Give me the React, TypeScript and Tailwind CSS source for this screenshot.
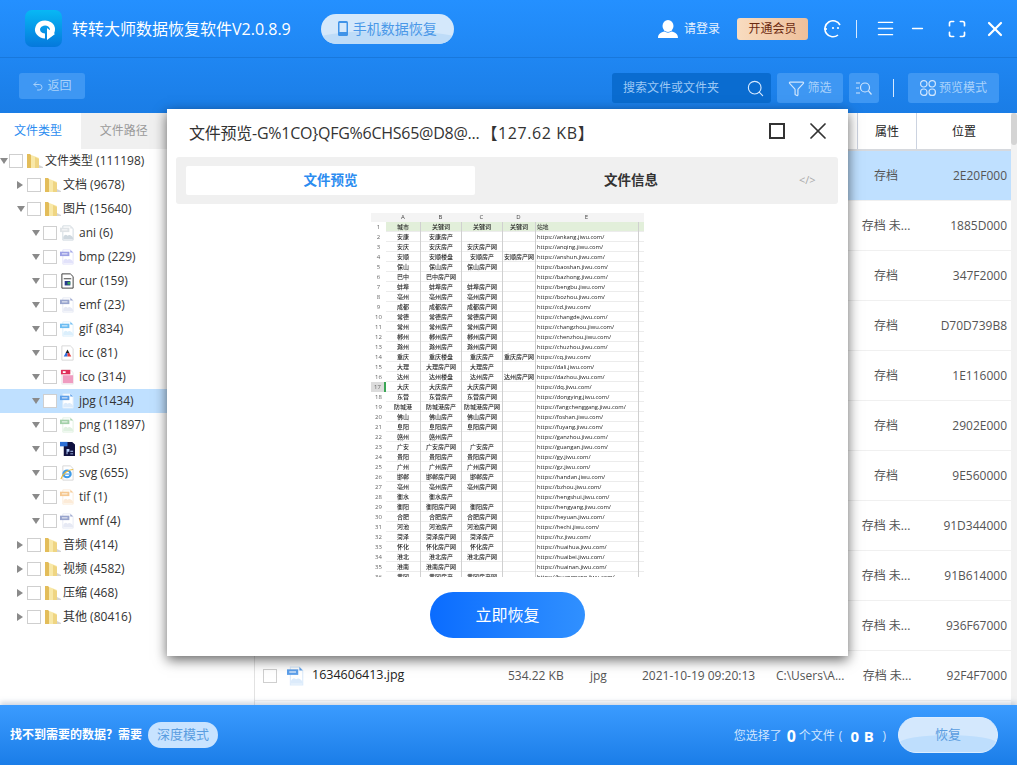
import { Funnel, Maximize, Menu, Minus, Search, Undo2, X } from 'lucide-react';

const font = { fontFamily: '"Open Sans", "Noto Sans CJK SC", sans-serif' };

type TreeItem = {
  label: string;
  level: number;
  open?: boolean;
  icon: string;
  selected?: boolean;
};

const treeItems: TreeItem[] = [
  { label: '文件类型 (111198)', level: 0, open: true, icon: 'folder' },
  { label: '文档 (9678)', level: 1, icon: 'folder' },
  { label: '图片 (15640)', level: 1, open: true, icon: 'folder' },
  { label: 'ani (6)', level: 2, open: true, icon: 'ani' },
  { label: 'bmp (229)', level: 2, open: true, icon: 'bmp' },
  { label: 'cur (159)', level: 2, open: true, icon: 'cur' },
  { label: 'emf (23)', level: 2, open: true, icon: 'emf' },
  { label: 'gif (834)', level: 2, open: true, icon: 'gif' },
  { label: 'icc (81)', level: 2, open: true, icon: 'icc' },
  { label: 'ico (314)', level: 2, open: true, icon: 'ico' },
  { label: 'jpg (1434)', level: 2, open: true, icon: 'jpg', selected: true },
  { label: 'png (11897)', level: 2, open: true, icon: 'png' },
  { label: 'psd (3)', level: 2, open: true, icon: 'psd' },
  { label: 'svg (655)', level: 2, open: true, icon: 'svg' },
  { label: 'tif (1)', level: 2, open: true, icon: 'tif' },
  { label: 'wmf (4)', level: 2, open: true, icon: 'wmf' },
  { label: '音频 (414)', level: 1, icon: 'folder' },
  { label: '视频 (4582)', level: 1, icon: 'folder' },
  { label: '压缩 (468)', level: 1, icon: 'folder' },
  { label: '其他 (80416)', level: 1, icon: 'folder' },
];

const fileRows = [
  ['存档', '2E20F000'],
  ['存档 未...', '1885D000'],
  ['存档', '347F2000'],
  ['存档', 'D70D739B8'],
  ['存档', '1E116000'],
  ['存档', '2902E000'],
  ['存档', '9E560000'],
  ['存档 未...', '91D344000'],
  ['存档 未...', '91B614000'],
  ['存档 未...', '936F67000'],
  ['存档 未...', '92F4F7000'],
];

const sheetRows = [
  ['安康', '安康房产', '', '', 'https://ankang.jiwu.com/'],
  ['安庆', '安庆房产', '安庆房产网', '', 'https://anqing.jiwu.com/'],
  ['安顺', '安顺楼盘', '安顺房产', '安顺房产网', 'https://anshun.jiwu.com/'],
  ['保山', '保山房产', '保山房产网', '', 'https://baoshan.jiwu.com/'],
  ['巴中', '巴中房产网', '', '', 'https://bazhong.jiwu.com/'],
  ['蚌埠', '蚌埠房产', '蚌埠房产网', '', 'https://bengbu.jiwu.com/'],
  ['亳州', '亳州房产', '亳州房产网', '', 'https://bozhou.jiwu.com/'],
  ['成都', '成都房产', '成都房产网', '', 'https://cd.jiwu.com/'],
  ['常德', '常德房产', '常德房产网', '', 'https://changde.jiwu.com/'],
  ['常州', '常州房产', '常州房产网', '', 'https://changzhou.jiwu.com/'],
  ['郴州', '郴州房产', '郴州房产网', '', 'https://chenzhou.jiwu.com/'],
  ['滁州', '滁州房产', '滁州房产网', '', 'https://chuzhou.jiwu.com/'],
  ['重庆', '重庆楼盘', '重庆房产', '重庆房产网', 'https://cq.jiwu.com/'],
  ['大理', '大理房产网', '大理房产', '', 'https://dali.jiwu.com/'],
  ['达州', '达州楼盘', '达州房产', '达州房产网', 'https://dazhou.jiwu.com/'],
  ['大庆', '大庆房产', '大庆房产网', '', 'https://dq.jiwu.com/'],
  ['东营', '东营房产', '东营房产网', '', 'https://dongying.jiwu.com/'],
  ['防城港', '防城港房产', '防城港房产网', '', 'https://fangchenggang.jiwu.com/'],
  ['佛山', '佛山房产', '佛山房产网', '', 'https://foshan.jiwu.com/'],
  ['阜阳', '阜阳房产', '阜阳房产网', '', 'https://fuyang.jiwu.com/'],
  ['赣州', '赣州房产', '', '', 'https://ganzhou.jiwu.com/'],
  ['广安', '广安房产网', '广安房产', '', 'https://guangan.jiwu.com/'],
  ['贵阳', '贵阳房产', '贵阳房产网', '', 'https://gy.jiwu.com/'],
  ['广州', '广州房产', '广州房产网', '', 'https://gz.jiwu.com/'],
  ['邯郸', '邯郸房产网', '邯郸房产', '', 'https://handan.jiwu.com/'],
  ['亳州', '亳州房产', '亳州房产网', '', 'https://bzhou.jiwu.com/'],
  ['衡水', '衡水房产', '', '', 'https://hengshui.jiwu.com/'],
  ['衡阳', '衡阳房产网', '衡阳房产', '', 'https://hengyang.jiwu.com/'],
  ['合肥', '合肥房产', '合肥房产网', '', 'https://heyuan.jiwu.com/'],
  ['河池', '河池房产', '河池房产网', '', 'https://hechi.jiwu.com/'],
  ['菏泽', '菏泽房产网', '菏泽房产', '', 'https://hz.jiwu.com/'],
  ['怀化', '怀化房产网', '怀化房产', '', 'https://huaihua.jiwu.com/'],
  ['淮北', '淮北房产', '淮北房产网', '', 'https://huaibei.jiwu.com/'],
  ['淮南', '淮南房产网', '', '', 'https://huainan.jiwu.com/'],
  ['黄冈', '黄冈房产', '黄冈房产网', '', 'https://huanggang.jiwu.com/'],
];

function Checkbox() {
  return <span className="block h-[14px] w-[14px] shrink-0 border border-[#cfcfcf] bg-white" />;
}

function Folder() {
  return (
    <svg width="18" height="16" viewBox="0 0 18 16" className="shrink-0">
      <path d="M1 1h3l1 1v13H1z" fill="#e3bd5a" />
      <path d="M5 2l3 1 5 2v10H5z" fill="#f8e8a8" />
      <path d="M9 4l4 2v9H9z" fill="#efd583" />
      <path d="M13 12l4 2v1h-4z" fill="#d4d4d4" />
    </svg>
  );
}

function FileIcon({ type, w = 15, h = 16 }: { type: string; w?: number; h?: number }) {
  if (type === 'folder') return <Folder />;
  const box = { width: w, height: h, viewBox: '0 0 16 18', className: 'shrink-0', preserveAspectRatio: 'none' };
  if (type === 'cur') {
    return (
      <svg {...box}>
        <path d="M2 1h9l3 3v13H2z" fill="#fff" stroke="#333" />
        <rect x="4" y="6" width="8" height="1" fill="#333" />
        <rect x="5" y="9" width="6" height="5" fill="#2a3a8c" />
        <rect x="8" y="10" width="3" height="3" fill="#3aa655" />
      </svg>
    );
  }
  if (type === 'icc') {
    return (
      <svg {...box}>
        <path d="M2 1h9l3 3v13H2z" fill="#fff" stroke="#d5d5d5" />
        <path d="M8 5l2 4H6z" fill="#222" />
        <path d="M6 9h2v4H4z" fill="#2f6fe0" />
        <path d="M8 9h2l2 4H8z" fill="#e23a3a" />
      </svg>
    );
  }
  if (type === 'ico') {
    return (
      <svg {...box}>
        <path d="M2 1h9l3 3v13H2z" fill="#fff" stroke="#e8e8e8" />
        <rect x="1" y="1" width="10" height="5" fill="#e02f5b" />
        <rect x="3" y="7" width="11" height="9" fill="#ef9cc0" />
        <rect x="3" y="2.5" width="3" height="2" fill="#fff" />
      </svg>
    );
  }
  if (type === 'psd') {
    return (
      <svg {...box}>
        <path d="M4 1h9l3 3v13H4z" fill="#0f1140" />
        <rect x="0" y="1" width="8" height="5" fill="#2b6fd6" />
        <path d="M7 9h3v3H8v3H7zM11 11h3v1h-3zM11 14h3v1h-3z" fill="#b9d3ff" />
      </svg>
    );
  }
  if (type === 'svg') {
    return (
      <svg {...box}>
        <path d="M3 1h8l3 3v13H3z" fill="#fff" stroke="#d5d5d5" />
        <circle cx="7.5" cy="10" r="5" fill="#3e9be8" />
        <circle cx="7.5" cy="10" r="2.6" fill="#fff" />
        <rect x="5" y="9.6" width="5" height="1.2" fill="#3e9be8" />
        <path d="M1 16C3 9 9 5 14 5" fill="none" stroke="#e8b93a" strokeWidth="1.2" />
      </svg>
    );
  }
  const colors: Record<string, [string, string]> = {
    ani: ['#dfe3e6', '#cfd8df'],
    bmp: ['#9b9fe4', '#e2e2fa'],
    emf: ['#98a4cd', '#e6e9f4'],
    gif: ['#6bbcf2', '#dbeffc'],
    jpg: ['#5c9fea', '#dcebfb'],
    png: ['#a3d0a9', '#e0f1e1'],
    tif: ['#f5c891', '#fcebd8'],
    wmf: ['#98a4cd', '#e6e9f4'],
  };
  const [main, soft] = colors[type];
  return (
    <svg {...box}>
      <path d="M3 1h8l3 3v13H3z" fill="#fff" stroke={soft} />
      <path d="M11 1l3 3h-3z" fill={main} />
      <rect x="0" y="3" width="10" height="5" fill={main} />
      <rect x="2" y="4.6" width="6" height="1.6" fill="#fff" opacity="0.6" />
      <path d="M3.5 16v-2.5c1.5-3 3-3 4.5-1.5 2-1.5 4-1 6 2.5V16z" fill={soft} />
    </svg>
  );
}

function TreeRow({ item }: { item: TreeItem }) {
  const pad = ['pl-0', 'pl-[17px]', 'pl-[32px]'][item.level];
  const triangleW = item.level === 2 ? 'w-[11px]' : item.level === 1 ? 'w-[10px]' : 'w-[9px]';
  return (
    <div className={`flex h-6 items-center text-[12px] text-[#333] ${pad} ${item.selected ? 'bg-[#bfe0ff]' : ''}`}>
      <span className={`flex shrink-0 items-center ${triangleW}`}>
        {item.open ? (
          <span className="block h-0 w-0 border-x-[4px] border-t-[6px] border-x-transparent border-t-[#8a8a8a]" />
        ) : (
          <span className="block h-0 w-0 border-y-[4px] border-l-[6px] border-y-transparent border-l-[#8a8a8a]" />
        )}
      </span>
      <Checkbox />
      <span className="ml-[3px] w-[19px]">
        <FileIcon type={item.icon} />
      </span>
      <span className="whitespace-nowrap">{item.label}</span>
    </div>
  );
}

function Logo() {
  return (
    <svg width="37" height="37" viewBox="0 0 37 37" className="shrink-0">
      <defs>
        <linearGradient id="logoBg" x1="0" y1="0" x2="0" y2="1">
          <stop offset="0" stopColor="#08b8f4" />
          <stop offset="1" stopColor="#0578dc" />
        </linearGradient>
      </defs>
      <rect width="37" height="37" rx="7" fill="url(#logoBg)" />
      <path d="M24 25a7.5 6.5 0 1 0-4 1" fill="none" stroke="#fff" strokeWidth="5" />
      <path d="M22 18l8 6-8 6z" fill="#fff" />
    </svg>
  );
}

function Header() {
  return (
    <div className="flex h-[58px] items-center border-b border-[#1878dc] pl-[25px]">
      <Logo />
      <span className="ml-[10px] text-[16px] text-white">转转大师数据恢复软件V2.0.8.9</span>
      <div className="relative ml-[30px] flex h-[30px] w-[133px] items-center justify-center gap-[5px] overflow-hidden rounded-full bg-[#d4e8fb] text-[14px] text-[#4a98e8]">
        <span className="absolute inset-x-0 bottom-0 h-[13px] rounded-t-[50%] bg-[#bedcf8]" />
        <svg width="10" height="15" viewBox="0 0 10 15" className="relative">
          <rect width="10" height="15" rx="1.5" fill="#3f93e8" />
          <rect x="1.5" y="2" width="7" height="9" fill="#d4e8fb" />
        </svg>
        <span className="relative">手机数据恢复</span>
      </div>
      <div className="ml-auto flex items-center pr-[10px] text-white">
        <svg width="20" height="18" viewBox="0 0 20 18">
          <ellipse cx="10" cy="6" rx="5.5" ry="6" fill="#fff" />
          <path d="M0 18c0-4 3-6 6.5-6.5 2 1.5 5 1.5 7 0C17 12 20 14 20 18z" fill="#fff" />
        </svg>
        <span className="ml-[6px] text-[12px] text-[#e6f2ff]">请登录</span>
        <span className="ml-[17px] flex h-[22px] w-[71px] items-center justify-center rounded-[3px] bg-gradient-to-r from-[#f8dcc0] to-[#eebf9a] text-[12px] text-[#6b2a10]">开通会员</span>
        <svg width="18" height="18" viewBox="0 0 18 18" className="ml-[16px]">
          <path d="M14 15A8 8 0 1 1 16 5" fill="none" stroke="#fff" strokeWidth="1.6" />
          <path d="M0 9h3" stroke="#fff" strokeWidth="1.6" />
          <circle cx="9" cy="8" r="1.1" fill="#fff" />
          <circle cx="14" cy="8" r="1.1" fill="#fff" />
        </svg>
        <span className="ml-[14px] h-[18px] w-px bg-[#d6e9ff]" />
        <Menu size={21} strokeWidth={1.7} className="ml-[18px]" />
        <Minus size={17} strokeWidth={1.9} className="ml-[13px]" />
        <Maximize size={20} strokeWidth={2} className="ml-[21px]" />
        <X size={24} strokeWidth={2.2} className="ml-[16px]" />
      </div>
    </div>
  );
}

function Toolbar() {
  return (
    <div className="flex h-[55px] items-start pl-[19px] pr-[18px] pt-[15px] text-[12px] text-[#a9d2fb]">
      <div className="flex h-[26px] w-[66px] items-center justify-center gap-[3px] rounded-[3px] bg-[#3e97f3]">
        <Undo2 size={12} strokeWidth={2} />
        <span className="text-[12px]">返回</span>
      </div>
      <div className="ml-auto flex h-[30px] w-[159px] items-center justify-between rounded-[3px] bg-[#0a6cd0] pl-[11px] pr-[6px]">
        <span className="text-[12px] text-[#9cc8f5]">搜索文件或文件夹</span>
        <Search size={19} strokeWidth={1.4} className="text-[#d6e9ff]" />
      </div>
      <div className="ml-[6px] flex h-[30px] w-[66px] items-center justify-center gap-[2px] rounded-[3px] bg-[#3e97f3]">
        <Funnel size={17} strokeWidth={1.7} className="text-[#cfe5fd]" />
        <span>筛选</span>
      </div>
      <div className="ml-[6px] flex h-[30px] w-[30px] items-center justify-center rounded-[3px] bg-[#3e97f3]">
        <svg width="16" height="14" viewBox="0 0 16 14" fill="none" stroke="#cfe5fd" strokeWidth="1.2">
          <path d="M0 2h4M0 7h3M0 12h4" />
          <circle cx="9" cy="6.5" r="4.5" />
          <path d="M12.5 10l3 3.5" />
        </svg>
      </div>
      <span className="ml-[14px] mt-[6px] h-[18px] w-px bg-[#d6e9ff]" />
      <div className="ml-[14px] flex h-[30px] w-[91px] items-center justify-center gap-[3px] rounded-[3px] bg-[#3e97f3]">
        <svg width="16" height="16" viewBox="0 0 16 16" fill="none" stroke="#cfe5fd" strokeWidth="1.2">
          <rect x="0.6" y="0.6" width="6.4" height="6.4" rx="3" />
          <rect x="9" y="0.6" width="6.4" height="6.4" rx="3" />
          <rect x="0.6" y="9" width="6.4" height="6.4" rx="3" />
          <rect x="9" y="9" width="6.4" height="6.4" rx="3" />
        </svg>
        <span>预览模式</span>
      </div>
    </div>
  );
}

function Sidebar() {
  return (
    <div className="flex w-[255px] shrink-0 flex-col border-r border-[#e2e2e2] bg-white">
      <div className="flex h-[36px] text-[12px]">
        <div className="flex w-[81px] items-center pl-[14px] text-[#2b8cf0]">文件类型</div>
        <div className="flex w-[174px] items-center bg-[#f0f0f0] pl-[19px] text-[#9a9a9a]">文件路径</div>
      </div>
      <div>
        {treeItems.map((item) => (
          <TreeRow key={item.label} item={item} />
        ))}
      </div>
    </div>
  );
}

function FileTable() {
  return (
    <div className="flex min-w-0 flex-1 bg-white">
      <div className="min-w-0 flex-1">
        <div className="flex h-[38px] justify-end border-b-2 border-[#d6d9de] text-[12px] text-[#222]">
          <div className="flex w-[60px] items-center justify-center border-x border-[#ccd3e0] pt-[2px]">属性</div>
          <div className="flex w-[94px] items-center justify-center pt-[2px]">位置</div>
        </div>
        {fileRows.map((row, i) => (
          <div
            key={row[1]}
            className={`flex h-[50px] items-center border-b border-[#f0f0f0] text-[12px] text-[#555] ${i === 0 ? 'bg-[#bfe0ff]' : ''}`}
          >
            {i === fileRows.length - 1 ? (
              <>
                <span className="ml-[8px]"><Checkbox /></span>
                <span className="ml-[10px]"><FileIcon type="jpg" w={18} h={20} /></span>
                <span className="ml-[7px] w-[196px] text-[12.5px] text-[#222]">1634606413.jpg</span>
                <span className="w-[82px]">534.22 KB</span>
                <span className="w-[52px]">jpg</span>
                <span className="w-[134px] whitespace-nowrap">2021-10-19 09:20:13</span>
                <span className="w-[82px] whitespace-nowrap">C:\Users\A...</span>
              </>
            ) : (
              <span className="w-[602px]" />
            )}
            <span className="w-[58px] text-center whitespace-nowrap">{row[0]}</span>
            <span className="flex-1 pr-[4px] text-right">{row[1]}</span>
          </div>
        ))}
      </div>
      <div className="w-[6px] shrink-0 bg-[#f2f2f2]">
        <div className="h-[32px] rounded-[3px] bg-[#d4d4d4]" />
      </div>
    </div>
  );
}

function Footer() {
  return (
    <div className="relative flex h-[60px] items-center bg-gradient-to-b from-[#3a9bff] to-[#1a7de8] pl-[10px] pr-[19px] shadow-[0_-3px_5px_rgba(120,140,170,0.35)]">
      <span className="text-[12px] font-bold text-white">找不到需要的数据？需要</span>
      <div className="ml-[6px] flex h-[26px] w-[70px] items-center justify-center rounded-full bg-[#c8e3ff] text-[13px] text-[#5a9de0]">深度模式</div>
      <div className="ml-auto mt-[2px] flex items-center text-[12px] text-[#cfe5ff]">
        <span>您选择了</span>
        <span className="ml-[5px] text-[16px] font-bold text-white">0</span>
        <span className="ml-[3px]">个文件</span>
        <span className="ml-[4px]">(</span>
        <span className="ml-[8px] text-[15px] font-bold tracking-[0.5px] text-white">0 B</span>
        <span className="ml-[8px]">)</span>
      </div>
      <div className="relative ml-[12px] flex h-[36px] w-[100px] items-center justify-center overflow-hidden rounded-full border border-[#dcedff] bg-[#d4e8fd] text-[13px] text-[#5a9de0]">
        <span className="absolute inset-x-0 bottom-0 h-[17px] rounded-t-[50%] bg-[#bedefd]" />
        <span className="relative">恢复</span>
      </div>
    </div>
  );
}

function SheetLine({ cells, num, head }: { cells: string[]; num: string; head?: boolean }) {
  const marked = num === '17';
  return (
    <div className={`grid h-[10px] grid-cols-[15px_34px_41px_41px_33px_103px_6px] border-b border-[#ececec] text-[6px] leading-[10px] font-medium whitespace-nowrap text-[#222] ${head ? 'bg-[#e2efda]' : ''}`}>
      <span className={`text-center text-[#666] ${marked ? 'border-r-2 border-[#3aa655] bg-[#dcdcdc]' : 'bg-white'}`}>{num}</span>
      <span className="text-center">{cells[0]}</span>
      <span className="border-l border-[#d0d0d0] text-center">{cells[1]}</span>
      <span className="border-l border-[#d0d0d0] text-center">{cells[2]}</span>
      <span className="border-l border-[#d0d0d0] text-center">{cells[3]}</span>
      <span className="border-l border-[#d0d0d0] pl-[1px] text-[5.8px] font-normal">{cells[4]}</span>
      <span className="border-l border-[#d0d0d0]" />
    </div>
  );
}

function SheetPreview() {
  return (
    <div className="mx-auto mt-[9px] h-[364px] w-[273px] overflow-hidden blur-[0.4px]">
      <div className="grid h-[9px] grid-cols-[15px_34px_41px_41px_33px_103px_6px] bg-[#f4f4f4] text-center text-[6px] leading-[9px] text-[#444]">
        <span />
        <span>A</span>
        <span>B</span>
        <span>C</span>
        <span>D</span>
        <span>E</span>
        <span />
      </div>
      <SheetLine num="1" head cells={['城市', '关键词', '关键词', '关键词', '站地']} />
      {sheetRows.map((cells, i) => (
        <SheetLine key={cells[4]} num={String(i + 2)} cells={cells} />
      ))}
    </div>
  );
}

function PreviewModal() {
  return (
    <div className="absolute left-[167px] top-[109px] flex h-[547px] w-[681px] flex-col bg-white shadow-[0_4px_12px_rgba(0,0,0,0.6)]">
      <div className="flex h-[48px] items-center pl-[22px] pr-[16px]">
        <span className="text-[16px] tracking-[-0.25px] text-[#333]">{'文件预览-G%1CO}QFG%6CHS65@D8@...'}</span>
        <span className="ml-[2px] text-[16px] tracking-[0.6px] text-[#333]">【127.62 KB】</span>
        <svg width="16" height="16" viewBox="0 0 16 16" className="mb-[4px] ml-auto" fill="none" stroke="#333" strokeWidth="2">
          <rect x="1" y="1" width="14" height="14" />
        </svg>
        <X size={28} strokeWidth={1.5} className="mb-[4px] ml-[19px] text-[#333]" />
      </div>
      <div className="ml-[9px] mr-[10px] flex h-[47px] items-center rounded-[3px] bg-[#f0f0f0] pl-[10px] text-[13.5px] font-bold">
        <div className="flex h-[29px] w-[289px] items-center justify-center rounded-[2px] bg-white text-[#2b8cf0]">文件预览</div>
        <div className="flex w-[312px] justify-center text-[#333]">文件信息</div>
        <div className="ml-[12px] text-[11px] font-normal text-[#aaa]">&lt;/&gt;</div>
      </div>
      <SheetPreview />
      <button className="mx-auto mt-[15px] flex h-[46px] w-[155px] items-center justify-center rounded-full bg-gradient-to-r from-[#0a6cff] to-[#3090ff] text-[16px] text-white">
        立即恢复
      </button>
    </div>
  );
}

export default function App() {
  return (
    <div style={font} className="relative flex h-[765px] w-[1017px] flex-col overflow-hidden bg-white">
      <div className="bg-gradient-to-b from-[#2490ff] to-[#1a7de6]">
        <Header />
        <Toolbar />
      </div>
      <div className="flex min-h-0 flex-1">
        <Sidebar />
        <FileTable />
      </div>
      <Footer />
      <PreviewModal />
    </div>
  );
}
